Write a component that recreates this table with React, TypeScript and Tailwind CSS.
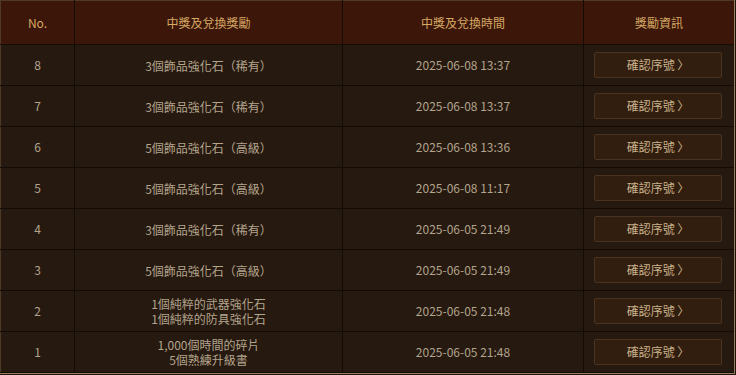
const rows = [
  { no: 8, reward: ['3個飾品強化石（稀有）'], time: '2025-06-08 13:37' },
  { no: 7, reward: ['3個飾品強化石（稀有）'], time: '2025-06-08 13:37' },
  { no: 6, reward: ['5個飾品強化石（高級）'], time: '2025-06-08 13:36' },
  { no: 5, reward: ['5個飾品強化石（高級）'], time: '2025-06-08 11:17' },
  { no: 4, reward: ['3個飾品強化石（稀有）'], time: '2025-06-05 21:49' },
  { no: 3, reward: ['5個飾品強化石（高級）'], time: '2025-06-05 21:49' },
  { no: 2, reward: ['1個純粹的武器強化石', '1個純粹的防具強化石'], time: '2025-06-05 21:48' },
  { no: 1, reward: ['1,000個時間的碎片', '5個熟練升級書'], time: '2025-06-05 21:48' }
]

export default function App() {
  return (
    <div
      className="h-[375px] w-[736px] overflow-hidden bg-[#1c140d]"
      style={{ fontFamily: '"Noto Sans CJK TC", "Noto Sans", sans-serif' }}
    >
      <div className="w-[735px] border-r border-b border-[#9a7d58]">
        <table className="w-[734px] table-fixed border-collapse border-l border-t border-[#4d3b28] text-[12px]">
          <colgroup>
            <col className="w-[74px]" />
            <col className="w-[268px]" />
            <col className="w-[241px]" />
            <col />
          </colgroup>
          <thead>
            <tr className="h-[44px] bg-[#3c1609] text-[#d6a864]">
              <th className="border-r border-b border-[#170b05] font-normal">No.</th>
              <th className="border-r border-b border-[#170b05] font-normal">中獎及兌換獎勵</th>
              <th className="border-r border-b border-[#170b05] font-normal">中獎及兌換時間</th>
              <th className="border-b border-[#170b05] font-normal">獎勵資訊</th>
            </tr>
          </thead>
          <tbody className="bg-[#261910] text-[#b3a48c]">
            {rows.map((r) => (
              <tr key={r.no} className="h-[41px]">
                <td className="border-r border-b border-[#120b06] text-center">{r.no}</td>
                <td className="border-r border-b border-[#120b06] text-center leading-[15px]">
                  {r.reward.map((t) => (
                    <div key={t}>{t}</div>
                  ))}
                </td>
                <td className="border-r border-b border-[#120b06] text-center">{r.time}</td>
                <td className="border-b border-[#120b06] px-[10px]">
                  <button className="flex h-[26px] w-[128px] items-center justify-center rounded-[2px] border border-[#4a3320] bg-[#311e0f] text-[12px] text-[#c9b18a]">
                    確認序號 〉
                  </button>
                </td>
              </tr>
            ))}
          </tbody>
        </table>
      </div>
    </div>
  )
}
